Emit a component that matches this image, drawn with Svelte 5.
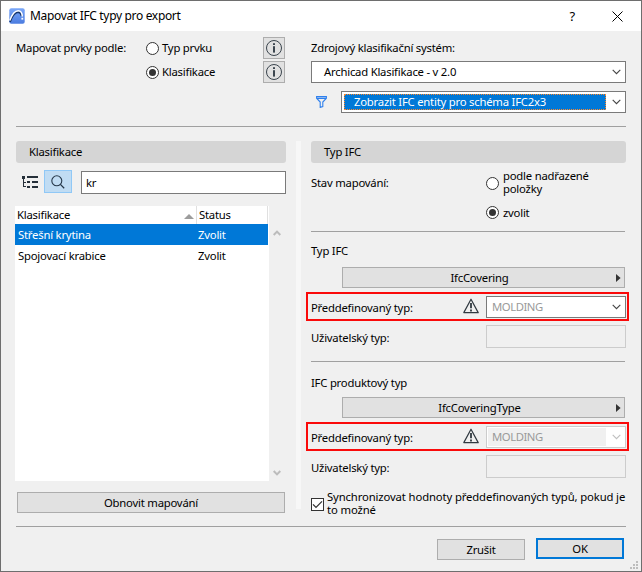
<script lang="ts">
	let mapBy = 'class';
	let mappingState = 'choose';
	let query = 'kr';
	let sync = true;
	let selected = 0;

	const rows = [
		{ name: 'Střešní krytina', status: 'Zvolit' },
		{ name: 'Spojovací krabice', status: 'Zvolit' }
	];

	const groups = [
		{ title: 'Typ IFC', entity: 'IfcCovering', predefined: 'MOLDING', locked: false },
		{ title: 'IFC produktový typ', entity: 'IfcCoveringType', predefined: 'MOLDING', locked: true }
	];
</script>

{#snippet chevron()}
	<svg class="chevron" width="9" height="6" viewBox="0 0 9 6">
		<path d="M0.7 0.8 L4.5 4.6 L8.3 0.8" fill="none" stroke="currentColor" stroke-width="1.1" />
	</svg>
{/snippet}

{#snippet info()}
	<button class="info" aria-label="Info">
		<svg width="18" height="18" viewBox="0 0 18 18">
			<circle cx="9" cy="9" r="7.5" fill="none" stroke="#3a444d" stroke-width="1" />
			<rect x="8.1" y="4.2" width="1.8" height="1.8" fill="#2b3640" />
			<rect x="8.1" y="7.2" width="1.8" height="6.4" fill="#2b3640" />
		</svg>
	</button>
{/snippet}

<div class="dialog">
	<header class="titlebar">
		<svg class="logo" width="16" height="16" viewBox="0 0 16 16">
			<defs>
				<linearGradient id="logo-bg" x1="0" y1="0" x2="0" y2="1">
					<stop offset="0" stop-color="#7aa7f8" />
					<stop offset="1" stop-color="#4b7ce0" />
				</linearGradient>
			</defs>
			<rect x="0.3" y="0.3" width="15.4" height="15.4" rx="2" fill="url(#logo-bg)" />
			<path d="M1 14 C3 8.5 6 4.4 9 4.2 C11 4.2 12 5.5 12.6 8" fill="none" stroke="#17376d" stroke-width="1.8" />
			<path d="M0.8 12.4 C3 6.5 6 2.7 9.2 2.7 C12 2.7 13.2 5 13.3 8.6" fill="none" stroke="#fff" stroke-width="1.5" />
			<rect x="12.4" y="9.8" width="1.8" height="1.8" fill="#fff" />
		</svg>
		<h1>Mapovat IFC typy pro export</h1>
		<span class="help">?</span>
		<svg class="close" width="11" height="11" viewBox="0 0 11 11">
			<path d="M0.5 0.5 L10.5 10.5 M10.5 0.5 L0.5 10.5" stroke="#000" stroke-width="1" />
		</svg>
	</header>

	<main>
		<section class="top">
			<div class="map-by">
				<span class="label">Mapovat prvky podle:</span>
				<div class="options">
					<div class="option">
						<button class="radio" class:on={mapBy === 'type'} aria-label="Typ prvku" onclick={() => (mapBy = 'type')}></button>
						<span>Typ prvku</span>
						{@render info()}
					</div>
					<div class="option">
						<button class="radio" class:on={mapBy === 'class'} aria-label="Klasifikace" onclick={() => (mapBy = 'class')}></button>
						<span>Klasifikace</span>
						{@render info()}
					</div>
				</div>
			</div>
			<div class="source">
				<span class="source-label">Zdrojový klasifikační systém:</span>
				<div class="select">
					<span class="value system">Archicad Klasifikace - v 2.0</span>
					{@render chevron()}
				</div>
				<div class="filter">
					<svg width="11" height="12" viewBox="0 0 11 12">
						<path d="M0.6 0.6 H10.4 V2.2 L6.8 6 V10.6 L4.2 11.4 V6 L0.6 2.2 Z M1 2.4 H10" fill="none" stroke="#2f80ed" stroke-width="1.1" />
					</svg>
					<div class="select">
						<span class="value focused">Zobrazit IFC entity pro schéma IFC2x3</span>
						{@render chevron()}
					</div>
				</div>
			</div>
		</section>

		<hr />

		<section class="middle">
			<div class="left">
				<h2>Klasifikace</h2>
				<div class="tools">
					<svg class="tree" width="16" height="12" viewBox="0 0 16 12" shape-rendering="crispEdges">
						<path
							d="M0 0h3v3h-3z M5 0h11v2h-11z M5 5h3v2h-3z M10 5h6v2h-6z M5 10h3v2h-3z M10 10h6v2h-6z M1 3h1v8h-1z M2 6h2v1h-2z M2 10h2v1h-2z"
							fill="#26303a"
						/>
					</svg>
					<button class="search-toggle" aria-label="Hledat">
						<svg width="14" height="14" viewBox="0 0 14 14">
							<circle cx="5.8" cy="5.8" r="5" fill="none" stroke="#26384a" stroke-width="1.1" />
							<path d="M9.4 9.4 L13.2 13.2" stroke="#26384a" stroke-width="1.3" />
						</svg>
					</button>
					<input class="query" type="text" aria-label="Hledat" bind:value={query} />
				</div>
				<div class="list">
					<div class="table">
						<div class="head">
							<span class="name">Klasifikace</span>
							<svg width="10" height="5" viewBox="0 0 10 5"><path d="M0 5 L5 0 L10 5 Z" fill="#9c9c9c" /></svg>
							<span class="status">Status</span>
						</div>
						{#each rows as row, i}
							<!-- svelte-ignore a11y_click_events_have_key_events, a11y_no_static_element_interactions -->
							<div class="row" class:selected={i === selected} onclick={() => (selected = i)}>
								<span class="name">{row.name}</span>
								<span>{row.status}</span>
							</div>
						{/each}
					</div>
					<div class="scroll">
						<svg width="8" height="6" viewBox="0 0 8 6"><path d="M0.7 5 L4 1.6 L7.3 5" fill="none" stroke="#bcbcbc" stroke-width="2" /></svg>
						<svg width="8" height="6" viewBox="0 0 8 6"><path d="M0.7 1 L4 4.4 L7.3 1" fill="none" stroke="#bcbcbc" stroke-width="2" /></svg>
					</div>
				</div>
				<button class="btn refresh">Obnovit mapování</button>
			</div>

			<div class="splitter"></div>

			<div class="right">
				<h2>Typ IFC</h2>
				<div class="state">
					<span class="state-label">Stav mapování:</span>
					<div class="choices">
						<div class="choice">
							<button class="radio" class:on={mappingState === 'parent'} aria-label="podle nadřazené položky" onclick={() => (mappingState = 'parent')}></button>
							<span class="two-line">podle nadřazené<br />položky</span>
						</div>
						<div class="choice last">
							<button class="radio" class:on={mappingState === 'choose'} aria-label="zvolit" onclick={() => (mappingState = 'choose')}></button>
							<span>zvolit</span>
						</div>
					</div>
				</div>

				{#each groups as group}
					<div class="group" class:locked={group.locked}>
						<hr />
						<h3>{group.title}</h3>
						<button class="btn entity">
							<span>{group.entity}</span>
							<svg width="5" height="8" viewBox="0 0 5 8"><path d="M0 0 L4.6 4 L0 8 Z" fill="#333" /></svg>
						</button>
						<div class="predefined">
							<span class="pre-label">Předdefinovaný typ:</span>
							<svg class="warn" width="16" height="16" viewBox="0 0 16 16">
								<path d="M8 1.2 L15.2 14.6 H0.8 Z" fill="none" stroke="#303940" stroke-width="1.2" stroke-linejoin="round" />
								<path d="M8 5 V10.2 M8 11.6 V13.4" stroke="#303940" stroke-width="1.8" />
							</svg>
							<div class="select" class:disabled={group.locked}>
								<span class="value grey">{group.predefined}</span>
								{@render chevron()}
							</div>
						</div>
						<div class="custom">
							<span class="custom-label">Uživatelský typ:</span>
							<input type="text" aria-label="Uživatelský typ" disabled />
						</div>
					</div>
				{/each}

				<div class="sync">
					<button class="check" aria-label="Synchronizovat" onclick={() => (sync = !sync)}>
						{#if sync}
							<svg width="11" height="11" viewBox="0 0 11 11"><path d="M1 5.4 L4 8.4 L10 2.4" fill="none" stroke="#333" stroke-width="1.3" /></svg>
						{/if}
					</button>
					<span class="sync-text">Synchronizovat hodnoty předdefinovaných typů, pokud je<br />to možné</span>
				</div>
			</div>
		</section>

		<hr />

		<footer>
			<button class="btn">Zrušit</button>
			<button class="btn ok">OK</button>
		</footer>
		<svg class="grip" width="8" height="8" viewBox="0 0 8 8" shape-rendering="crispEdges">
			<path d="M6 0h2v2h-2z M3 3h2v2h-2z M6 3h2v2h-2z M0 6h2v2h-2z M3 6h2v2h-2z M6 6h2v2h-2z" fill="#bdbdbd" />
		</svg>
	</main>
</div>

<style>
	:global(body) {
		margin: 0;
	}

	.dialog {
		position: relative;
		box-sizing: border-box;
		width: 642px;
		height: 572px;
		border: 1px solid #6e6e6e;
		background: #f0f0f0;
		color: #000;
		font: 11.3px/14px 'Noto Sans', 'Open Sans', sans-serif;
		letter-spacing: -0.22px;
		white-space: nowrap;
		overflow: hidden;
	}

	.dialog * {
		box-sizing: border-box;
	}

	svg {
		display: block;
		flex: none;
	}

	button,
	input {
		margin: 0;
		padding: 0;
		font: inherit;
		letter-spacing: inherit;
		color: inherit;
		border-radius: 0;
		outline: none;
	}

	hr {
		height: 1px;
		margin: 0;
		border: 0;
		background: #a0a0a0;
	}

	.titlebar {
		display: flex;
		align-items: center;
		height: 30px;
		padding: 0 18px 0 8px;
		background: #fff;
	}

	h1 {
		flex: 1;
		margin: 0 0 0 5px;
		font-size: 12px;
		font-weight: 400;
		letter-spacing: -0.33px;
	}

	.help {
		margin-right: 37px;
		font-size: 13px;
	}

	main {
		padding: 6px 15px 0;
	}

	.top {
		display: flex;
		justify-content: space-between;
		height: 89px;
	}

	.map-by {
		display: flex;
		width: 269px;
	}

	.label {
		width: 130px;
		line-height: 22px;
	}

	.options {
		display: flex;
		flex: 1;
		flex-direction: column;
		gap: 2px;
	}

	.option {
		display: flex;
		align-items: center;
		height: 22px;
	}

	.option span {
		flex: 1;
		margin-left: 3px;
	}

	.radio {
		display: grid;
		place-items: center;
		width: 13px;
		height: 13px;
		flex: none;
		border: 1px solid #333;
		border-radius: 50%;
		background: #fff;
	}

	.radio.on::after {
		content: '';
		width: 7px;
		height: 7px;
		border-radius: 50%;
		background: #333;
	}

	.info {
		display: grid;
		place-items: center;
		width: 22px;
		height: 22px;
		border: 1px solid #adadad;
		background: #e1e1e1;
	}

	.source {
		width: 315px;
	}

	.source-label {
		display: block;
		height: 24px;
		line-height: 22px;
	}

	.select {
		display: flex;
		align-items: center;
		justify-content: space-between;
		height: 22px;
		padding-right: 4px;
		border: 1px solid #7a7a7a;
		background: #fff;
		color: #444;
	}

	.value {
		color: #000;
	}

	.system {
		margin-left: 12px;
	}

	.filter {
		display: flex;
		align-items: center;
		margin-top: 8px;
		padding-left: 5px;
	}

	.filter .select {
		width: 285px;
		margin-left: auto;
	}

	.focused {
		width: 262px;
		height: 16px;
		margin-left: 2px;
		padding-left: 9px;
		border: 1px dotted #ff8728;
		background: #0078d7;
		color: #fff;
	}

	.middle {
		display: flex;
		height: 399px;
		padding-top: 14px;
	}

	h2 {
		height: 22px;
		margin: 0;
		padding-left: 13px;
		border-radius: 3px;
		background: #d5d5d5;
		font-size: inherit;
		font-weight: 400;
		line-height: 22px;
	}

	.left {
		width: 270px;
	}

	.tools {
		display: flex;
		align-items: center;
		height: 24px;
		margin-top: 7px;
		padding-left: 6px;
	}

	.search-toggle {
		display: grid;
		place-items: center;
		width: 28px;
		height: 23px;
		margin: -1px 9px 0 6px;
		border: 1px solid #90c8f6;
		background: #c0dcf3;
	}

	.query {
		width: 205px;
		height: 23px;
		padding: 0 4px;
		border: 1px solid #7a7a7a;
		background: #fff;
	}

	.list {
		display: flex;
		height: 275px;
		margin: 12px 0 0 -1px;
	}

	.table {
		width: 254px;
		background: #fff;
	}

	.head,
	.row {
		display: flex;
		align-items: center;
		width: 253px;
	}

	.head {
		height: 18px;
		padding-left: 2px;
		border-right: 1px solid #e0e0e0;
	}

	.head svg {
		margin: 2px 2px 0 0;
	}

	.head .name {
		width: 167px;
	}

	.status {
		height: 18px;
		padding-left: 2px;
		border-left: 1px solid #e0e0e0;
		line-height: 18px;
	}

	.row {
		height: 21px;
		padding-left: 3px;
	}

	.row .name {
		width: 180px;
	}

	.row.selected {
		background: #0078d7;
		color: #fff;
	}

	.scroll {
		display: flex;
		flex-direction: column;
		justify-content: space-between;
		padding: 24px 0 5px 4px;
	}

	.btn {
		height: 21px;
		border: 1px solid #adadad;
		background: #e1e1e1;
		text-align: center;
		line-height: 19px;
	}

	.refresh {
		display: block;
		width: 268px;
		margin: 11px 0 0 1px;
	}

	.splitter {
		width: 5px;
		height: 368px;
		margin: 0 10px;
		background: #f7f7f7;
	}

	.right {
		width: 315px;
	}

	.state {
		display: flex;
		height: 68px;
	}

	.state-label {
		width: 175px;
		padding-top: 13px;
	}

	.choices {
		padding-top: 7px;
	}

	.choice {
		display: flex;
		align-items: center;
		height: 26px;
		gap: 4px;
		line-height: 13px;
	}

	.two-line {
		margin-top: -2px;
	}

	.choice.last {
		height: 13px;
		margin-top: 10px;
	}

	.group {
		height: 130px;
	}

	.group hr {
		width: 314px;
	}

	h3 {
		margin: 0;
		height: 35px;
		padding-top: 12px;
		font-size: inherit;
		font-weight: 400;
	}

	.locked h3 {
		padding-top: 14px;
	}

	.entity {
		display: flex;
		align-items: center;
		width: 283px;
		margin-left: 31px;
		padding-right: 3px;
	}

	.entity span {
		flex: 1;
	}

	.predefined {
		display: flex;
		align-items: center;
		width: 323px;
		height: 29px;
		margin: 4px 0 0 -5px;
		padding: 0 1px 0 3px;
		border: 2px solid #fa0a0a;
	}

	.pre-label,
	.custom-label {
		padding-top: 2px;
	}

	.warn {
		margin: -2px 7px 0 auto;
	}

	.predefined .select {
		width: 140px;
	}

	.grey {
		flex: 1;
		margin-left: 5px;
		color: #9a9a9a;
		letter-spacing: -0.45px;
	}

	.select.disabled {
		border-color: #ccc;
		color: #bfbfbf;
	}

	.disabled .grey {
		height: 18px;
		margin: 0 6px 0 1px;
		padding-left: 4px;
		background: #f0f0f0;
		line-height: 18px;
	}

	.custom {
		display: flex;
		align-items: center;
		justify-content: space-between;
		height: 23px;
		margin-top: 4px;
	}

	.custom input {
		width: 140px;
		height: 23px;
		border: 1px solid #ccc;
		background: #f0f0f0;
	}

	.sync {
		display: flex;
		align-items: center;
		height: 26px;
		gap: 3px;
		line-height: 13px;
	}

	.sync-text {
		margin-top: -2px;
		letter-spacing: -0.13px;
	}

	.check {
		display: grid;
		place-items: center;
		width: 13px;
		height: 13px;
		flex: none;
		border: 1px solid #333;
		background: #fff;
	}

	footer {
		display: flex;
		justify-content: flex-end;
		gap: 11px;
		padding: 12px 2px 0 0;
	}

	footer .btn {
		width: 88px;
	}

	footer .ok {
		margin-top: -1px;
		border: 2px solid #0078d7;
		line-height: 17px;
	}

	.grip {
		position: absolute;
		right: 3px;
		bottom: 2px;
	}
</style>
